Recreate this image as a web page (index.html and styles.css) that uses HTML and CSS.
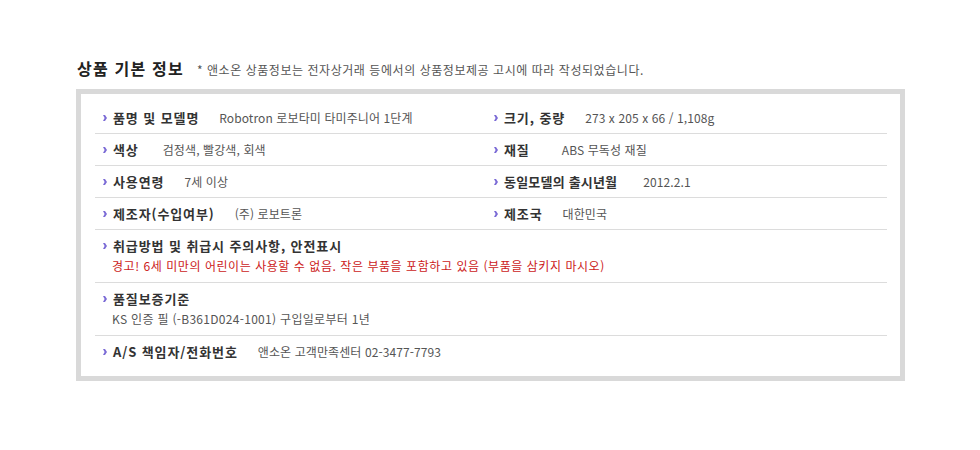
FILE: index.html
```html
<!DOCTYPE html>
<html lang="ko">
<head>
<meta charset="utf-8">
<title>상품 기본 정보</title>
<link rel="stylesheet" href="styles.css">
</head>
<body>
<div class="wrap">
  <div class="head">
    <h2 class="title">상품 기본 정보</h2>
    <span class="note">* 앤소온 상품정보는 전자상거래 등에서의 상품정보제공 고시에 따라 작성되었습니다.</span>
  </div>
  <div class="box">
    <div class="row two">
      <div class="cell"><span class="bul"><svg width="4" height="6" viewBox="0 0 4 6"><polygon points="0,0 2,0 4,3 2,6 0,6 1.6,3" fill="#7b6bd6"/></svg></span><span class="lab">품명 및 모델명</span><span class="val">Robotron 로보타미 타미주니어 1단계</span></div>
      <div class="cell"><span class="bul"><svg width="4" height="6" viewBox="0 0 4 6"><polygon points="0,0 2,0 4,3 2,6 0,6 1.6,3" fill="#7b6bd6"/></svg></span><span class="lab">크기, 중량</span><span class="val">273 x 205 x 66 / 1,108g</span></div>
    </div>
    <div class="row two">
      <div class="cell"><span class="bul"><svg width="4" height="6" viewBox="0 0 4 6"><polygon points="0,0 2,0 4,3 2,6 0,6 1.6,3" fill="#7b6bd6"/></svg></span><span class="lab gap-m">색상</span><span class="val">검정색, 빨강색, 회색</span></div>
      <div class="cell"><span class="bul"><svg width="4" height="6" viewBox="0 0 4 6"><polygon points="0,0 2,0 4,3 2,6 0,6 1.6,3" fill="#7b6bd6"/></svg></span><span class="lab gap-l">재질</span><span class="val">ABS 무독성 재질</span></div>
    </div>
    <div class="row two">
      <div class="cell"><span class="bul"><svg width="4" height="6" viewBox="0 0 4 6"><polygon points="0,0 2,0 4,3 2,6 0,6 1.6,3" fill="#7b6bd6"/></svg></span><span class="lab">사용연령</span><span class="val">7세 이상</span></div>
      <div class="cell"><span class="bul"><svg width="4" height="6" viewBox="0 0 4 6"><polygon points="0,0 2,0 4,3 2,6 0,6 1.6,3" fill="#7b6bd6"/></svg></span><span class="lab gap-s">동일모델의 출시년월</span><span class="val">2012.2.1</span></div>
    </div>
    <div class="row two">
      <div class="cell"><span class="bul"><svg width="4" height="6" viewBox="0 0 4 6"><polygon points="0,0 2,0 4,3 2,6 0,6 1.6,3" fill="#7b6bd6"/></svg></span><span class="lab">제조자(수입여부)</span><span class="val">(주) 로보트론</span></div>
      <div class="cell"><span class="bul"><svg width="4" height="6" viewBox="0 0 4 6"><polygon points="0,0 2,0 4,3 2,6 0,6 1.6,3" fill="#7b6bd6"/></svg></span><span class="lab">제조국</span><span class="val">대한민국</span></div>
    </div>
    <div class="row stack">
      <div class="cell"><span class="bul"><svg width="4" height="6" viewBox="0 0 4 6"><polygon points="0,0 2,0 4,3 2,6 0,6 1.6,3" fill="#7b6bd6"/></svg></span><span class="lab">취급방법 및 취급시 주의사항, 안전표시</span></div>
      <div class="desc warn">경고! 6세 미만의 어린이는 사용할 수 없음. 작은 부품을 포함하고 있음 (부품을 삼키지 마시오)</div>
    </div>
    <div class="row stack">
      <div class="cell"><span class="bul"><svg width="4" height="6" viewBox="0 0 4 6"><polygon points="0,0 2,0 4,3 2,6 0,6 1.6,3" fill="#7b6bd6"/></svg></span><span class="lab">품질보증기준</span></div>
      <div class="desc">KS 인증 필 (-B361D024-1001) 구입일로부터 1년</div>
    </div>
    <div class="row">
      <div class="cell"><span class="bul"><svg width="4" height="6" viewBox="0 0 4 6"><polygon points="0,0 2,0 4,3 2,6 0,6 1.6,3" fill="#7b6bd6"/></svg></span><span class="lab">A/S 책임자/전화번호</span><span class="val">앤소온 고객만족센터 02-3477-7793</span></div>
    </div>
  </div>
</div>
</body>
</html>
```

FILE: styles.css
```css
html, body {
  margin: 0;
  padding: 0;
  background: #fff;
}
body {
  font-family: "Noto Sans CJK KR", "Noto Sans", sans-serif;
  color: #444;
}
.wrap {
  padding: 56px 0 0 76px;
  width: 829px;
}
.head {
  display: flex;
  align-items: baseline;
  height: 24px;
  line-height: 24px;
  margin-bottom: 9px;
  padding-left: 1px;
}
.title {
  margin: 0;
  font-size: 16px;
  font-weight: bold;
  color: #222;
  letter-spacing: 1.2px;
}
.note {
  margin-left: 13px;
  font-size: 12px;
  color: #555;
  letter-spacing: 0.55px;
}
.box {
  border: 5px solid #d9d9d9;
  background: #fff;
  padding: 8px 13px 9px 14px;
}
.row {
  border-bottom: 1px solid #dcdcdc;
  height: 31px;
  display: flex;
  align-items: center;
}
.row:last-child {
  border-bottom: none;
}
.row.two {
  display: grid;
  grid-template-columns: 391px 1fr;
  align-items: center;
}
.row.stack {
  height: auto;
  display: block;
  padding: 5px 0 6px;
}
.row.stack .cell {
  height: 21px;
}
.cell {
  display: flex;
  align-items: center;
  padding-left: 8px;
  white-space: nowrap;
}
.bul {
  display: inline-flex;
  width: 4px;
  height: 6px;
  margin-right: 6px;
}
.bul svg {
  display: block;
}
.lab {
  font-size: 13px;
  font-weight: bold;
  color: #333;
  line-height: 20px;
  letter-spacing: 0.9px;
  margin-right: 20px;
}
.lab.gap-m {
  margin-right: 24px;
}
.lab.gap-l {
  margin-right: 32px;
}
.lab.gap-s {
  margin-right: 26px;
  letter-spacing: 0.2px;
}
.val {
  font-size: 12px;
  color: #555;
  line-height: 20px;
  letter-spacing: 0.1px;
}
.desc {
  font-size: 12px;
  line-height: 20px;
  color: #555;
  padding-left: 17px;
  letter-spacing: 0.3px;
}
.desc.warn {
  color: #cc1a1a;
  letter-spacing: 0.55px;
}
```
